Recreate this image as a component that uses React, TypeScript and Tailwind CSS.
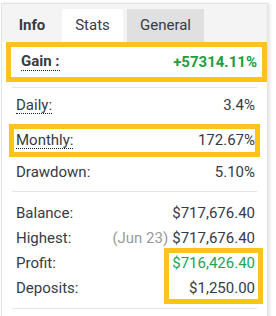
import React from "react";

const dotted = "border-b border-dotted border-[#222]";

function Row({ label, value, note, underline, valueClass }: { label: string; value: string; note?: string; underline?: boolean; valueClass?: string }) {
  return (
    <div className="flex items-center justify-between h-[25px] pl-[4px] pr-[2px]">
      <span className={underline ? `${dotted} leading-[16px]` : ""}>{label}</span>
      <span className={valueClass}>
        {note && <span className="text-[#9a9a9a] mr-[4px]">{note}</span>}
        {value}
      </span>
    </div>
  );
}

export default function App() {
  return (
    <div className="w-[276px] h-[316px] bg-white overflow-hidden font-['Roboto',sans-serif] text-[15px] text-[#363b45]">
      <div className="ml-[1px] mt-[3px] w-[267px] h-[340px] border border-[#e3e3e3] bg-white shadow-[2px_0_3px_rgba(0,0,0,0.1)]">
        <div className="flex items-end h-[38px] bg-[#f4f4f4]">
          <div className="w-[60px] h-[33px] flex items-center justify-center font-bold">Info</div>
          <div className="w-[61px] h-[33px] flex items-center justify-center bg-white">Stats</div>
          <div className="ml-[4px] w-[77px] h-[33px] flex items-center justify-center bg-[#e0e0e0]">General</div>
        </div>

        <div className="ml-[4px] w-[261px] h-[40px] border-[5px] border-[#fcc419] flex items-center justify-between pl-[10px] pr-[5px] font-bold">
          <span className={`${dotted} leading-[17px]`}>Gain :</span>
          <span className="text-[#1f9d3f]">+57314.11%</span>
        </div>

        <div className="mx-[10px] mt-[5px] border-t border-[#e6e6e6]" />

        <div className="px-[10px] pt-[5px]">
          <Row label="Daily:" value="3.4%" underline />
          <div className="-mx-[3px] mt-[6px] h-[33px] border-[5px] border-[#fcc419] flex items-center justify-between pl-[2px]">
            <span className={`${dotted} leading-[16px]`}>Monthly:</span>
            <span>172.67%</span>
          </div>
          <div className="mt-[3px]">
            <Row label="Drawdown:" value="5.10%" />
          </div>
        </div>

        <div className="mx-[10px] mt-[6px] border-t border-[#e6e6e6]" />

        <div className="px-[10px] pt-[9px]">
          <Row label="Balance:" value="$717,676.40" />
          <Row label="Highest:" value="$717,676.40" note="(Jun 23)" />
          <div className="relative">
            <Row label="Profit:" value="$716,426.40" valueClass="text-[#23a455]" />
            <Row label="Deposits:" value="$1,250.00" />
            <div className="absolute right-[-6px] top-[-3px] w-[99px] h-[56px] border-[5px] border-[#fcc419]" />
          </div>
        </div>

        <div className="mx-[10px] mt-[7px] border-t border-[#e6e6e6]" />
      </div>
    </div>
  );
}
